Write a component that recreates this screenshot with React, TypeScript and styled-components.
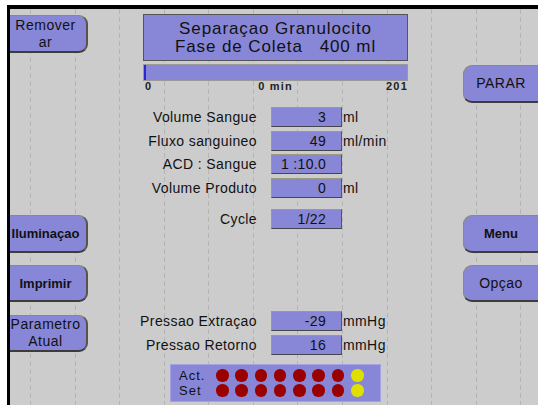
import React from "react";
import styled, { createGlobalStyle } from "styled-components";

const BLUE = "#8886d6";
const GRAY = "#cccccc";

const Global = createGlobalStyle`
  html, body { margin: 0; padding: 0; overflow: hidden; background: #fff; }
  * { box-sizing: border-box; }
  body { font-family: "Liberation Sans", Arial, sans-serif; color: #111; }
`;

const Page = styled.div`
  width: 100vw;
  height: 100vh;
  padding: 5px 0 0 7px;
  background: #fff;
`;

const Screen = styled.div`
  height: 100%;
  border-top: 4px solid #000;
  border-left: 3px solid #000;
  overflow: hidden;
  display: grid;
  grid-template-columns: 78px 375px 1fr;
  background:
    repeating-linear-gradient(to bottom, transparent 0 5px, ${GRAY} 5px 8px),
    repeating-linear-gradient(to right, transparent 0 20px, #b5b5b5 20px 21px, transparent 21px 44.57px),
    ${GRAY};
`;

const Column = styled.div<{ $side: "left" | "right" }>`
  display: flex;
  flex-direction: column;
  align-items: ${(p) => (p.$side === "left" ? "flex-start" : "stretch")};
`;

const SideButton = styled.button<{ $side: "left" | "right"; $mt: number; $h: number; $bold?: boolean }>`
  margin-top: ${(p) => p.$mt}px;
  height: ${(p) => p.$h}px;
  width: ${(p) => (p.$side === "left" ? "calc(100% + 6px)" : "100%")};
  margin-left: ${(p) => (p.$side === "left" ? "-6px" : "0")};
  background: ${BLUE};
  border: 1px solid #8c8a70;
  border-bottom: 2px solid #3c3c3c;
  ${(p) => (p.$side === "left" ? "border-right: 2px solid #55554a;" : "border-right: none;")}
  border-radius: ${(p) => (p.$side === "left" ? "0 9px 9px 0" : "9px 0 0 9px")};
  padding: 0;
  display: flex;
  flex-direction: column;
  align-items: center;
  justify-content: center;
  font-family: "Liberation Sans", Arial, sans-serif;
  font-size: ${(p) => (p.$bold ? 13 : 14)}px;
  font-weight: ${(p) => (p.$bold ? 700 : 400)};
  letter-spacing: ${(p) => (p.$bold ? "0" : "0.5px")};
  line-height: 17px;
  color: #111;
`;

const Center = styled.div`
  display: flex;
  flex-direction: column;
  align-items: center;
`;

const TitleBox = styled.div`
  margin-top: 5px;
  width: 265px;
  height: 47px;
  background: ${BLUE};
  border: 1px solid #555;
  display: flex;
  flex-direction: column;
  align-items: center;
  justify-content: center;
  font-size: 17px;
  letter-spacing: 0.9px;
  line-height: 18px;
  white-space: pre;
  color: #111;
`;

const Progress = styled.div`
  margin-top: 3px;
  width: 265px;
  height: 17px;
  background: ${BLUE};
  border: 1px solid #999;
  display: flex;
`;

const ProgressFill = styled.div`
  height: 100%;
  background: #2a28d0;
`;

const Scale = styled.div`
  width: 265px;
  height: 11px;
  display: grid;
  grid-template-columns: 1fr auto 1fr;
  font-size: 11px;
  font-weight: 700;
  letter-spacing: 1.2px;
  line-height: 11px;
  color: #222;
`;

const ScaleMark = styled.span<{ $align: "start" | "center" | "end" }>`
  justify-self: ${(p) => p.$align};
  padding-left: ${(p) => (p.$align === "start" ? "2px" : "0")};
`;

const FieldGroup = styled.div<{ $mt: number; $gap: number }>`
  align-self: stretch;
  margin-left: 32px;
  margin-top: ${(p) => p.$mt}px;
  display: grid;
  grid-template-columns: 151px 71px auto;
  grid-auto-rows: 20px;
  row-gap: ${(p) => p.$gap}px;
  align-items: center;
`;

const Label = styled.span`
  text-align: right;
  padding-right: 14px;
  font-size: 14px;
  letter-spacing: 0.4px;
  color: #111;
  white-space: nowrap;
`;

const ValueBox = styled.span`
  height: 20px;
  background: ${BLUE};
  border: 1px solid #9c9a80;
  border-bottom-color: #45454f;
  border-right-color: #55555f;
  text-align: right;
  padding-right: 15px;
  font-size: 14px;
  letter-spacing: 0.3px;
  line-height: 18px;
  color: #111;
  white-space: pre;
`;

const Unit = styled.span`
  padding-left: 1px;
  font-size: 14px;
  letter-spacing: 0.4px;
  color: #111;
`;

const LedPanel = styled.div`
  align-self: flex-start;
  margin-left: 82px;
  margin-top: 9px;
  width: 211px;
  height: 38px;
  background: ${BLUE};
  border: 1px solid #a4a2e2;
  display: flex;
  align-items: center;
  padding-left: 8px;
`;

const LedLabels = styled.div`
  width: 37px;
  display: flex;
  flex-direction: column;
  font-size: 13px;
  letter-spacing: 1px;
  line-height: 15px;
  color: #111;
`;

const LedGrid = styled.div`
  display: grid;
  grid-template-columns: repeat(8, 12.5px);
  grid-template-rows: 12.5px 12.5px;
  column-gap: 6.8px;
  row-gap: 2.5px;
`;

const Led = styled.span<{ $on: "red" | "yellow" }>`
  width: 12.5px;
  height: 12.5px;
  border-radius: 50%;
  background: ${(p) => (p.$on === "red" ? "#9a0000" : "#e0e000")};
`;

type Field = { label: string; value: string; unit?: string };

const mainFields: Field[] = [
  { label: "Volume Sangue", value: "3", unit: "ml" },
  { label: "Fluxo sanguineo", value: "49", unit: "ml/min" },
  { label: "ACD : Sangue", value: "1 :10.0" },
  { label: "Volume Produto", value: "0", unit: "ml" },
];

const pressureFields: Field[] = [
  { label: "Pressao Extraçao", value: "-29", unit: "mmHg" },
  { label: "Pressao Retorno", value: "16", unit: "mmHg" },
];

const renderFields = (fields: Field[]) =>
  fields.map((f) => (
    <React.Fragment key={f.label}>
      <Label>{f.label}</Label>
      <ValueBox>{f.value}</ValueBox>
      <Unit>{f.unit ?? ""}</Unit>
    </React.Fragment>
  ));

const leds: ("red" | "yellow")[] = ["red", "red", "red", "red", "red", "red", "red", "yellow"];

export default function App() {
  return (
    <>
      <Global />
      <Page>
        <Screen>
          <Column $side="left">
            <SideButton $side="left" $mt={6} $h={38}>
              <span>Remover</span>
              <span>ar</span>
            </SideButton>
            <SideButton $side="left" $mt={162} $h={38} $bold>
              Iluminaçao
            </SideButton>
            <SideButton $side="left" $mt={12} $h={37} $bold>
              Imprimir
            </SideButton>
            <SideButton $side="left" $mt={13} $h={37}>
              <span>Parametro</span>
              <span>Atual</span>
            </SideButton>
          </Column>

          <Center>
            <TitleBox>
              <span>Separaçao Granulocito</span>
              <span>{"Fase de Coleta   400 ml"}</span>
            </TitleBox>
            <Progress>
              <ProgressFill style={{ width: `${Math.max(2, (0 / 201) * 263)}px` }} />
            </Progress>
            <Scale>
              <ScaleMark $align="start">0</ScaleMark>
              <ScaleMark $align="center">0 min</ScaleMark>
              <ScaleMark $align="end">201</ScaleMark>
            </Scale>

            <FieldGroup $mt={15} $gap={3.7}>
              {renderFields(mainFields)}
            </FieldGroup>

            <FieldGroup $mt={11} $gap={0}>
              {renderFields([{ label: "Cycle", value: "1/22" }])}
            </FieldGroup>

            <FieldGroup $mt={82} $gap={4}>
              {renderFields(pressureFields)}
            </FieldGroup>

            <LedPanel>
              <LedLabels>
                <span>Act.</span>
                <span>Set</span>
              </LedLabels>
              <LedGrid>
                {leds.map((c, i) => (
                  <Led key={`a${i}`} $on={c} />
                ))}
                {leds.map((c, i) => (
                  <Led key={`s${i}`} $on={c} />
                ))}
              </LedGrid>
            </LedPanel>
          </Center>

          <Column $side="right">
            <SideButton $side="right" $mt={56} $h={38}>
              PARAR
            </SideButton>
            <SideButton $side="right" $mt={112} $h={38} $bold>
              Menu
            </SideButton>
            <SideButton $side="right" $mt={12} $h={37}>
              Opçao
            </SideButton>
          </Column>
        </Screen>
      </Page>
    </>
  );
}
